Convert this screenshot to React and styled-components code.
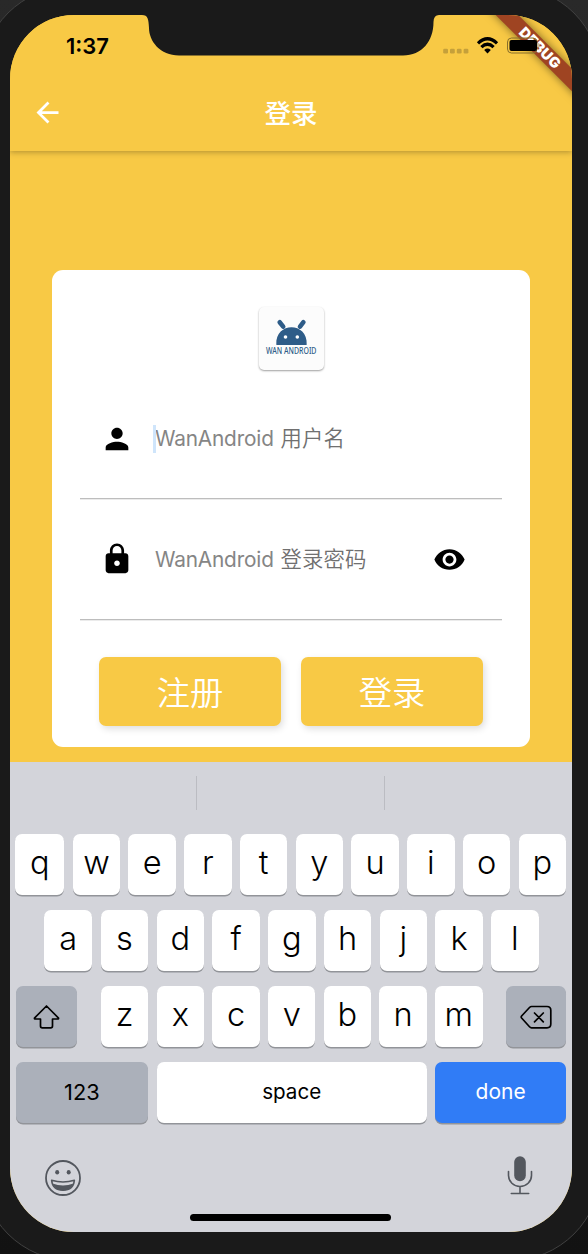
import React from 'react';
import styled, { createGlobalStyle } from 'styled-components';
import { MdArrowBack, MdPerson, MdLock, MdVisibility } from 'react-icons/md';

const GlobalStyle = createGlobalStyle`
  * { box-sizing: border-box; }
  body {
    margin: 0;
    background: #1a1a1a;
    font-family: Inter, 'Noto Sans CJK SC', sans-serif;
  }
`;

const yellow = '#f8c945';

const Stage = styled.div`
  position: relative;
  width: 588px;
  height: 1254px;
  padding: 15px 16px 22px 10px;
  overflow: hidden;
  background: linear-gradient(#292929, #121212);
`;

const Bezel = styled.div`
  position: absolute;
  left: -19px;
  top: -14px;
  width: 620px;
  height: 1275px;
  border: 1.5px solid #414141;
  border-radius: 91px;
  background: #1a1a1a;
`;

const Screen = styled.div`
  position: relative;
  display: flex;
  flex-direction: column;
  width: 562px;
  height: 1217px;
  border-radius: 64px;
  overflow: hidden;
  background: ${yellow};
`;

const Notch = styled.svg`
  position: absolute;
  left: 130px;
  top: 0;
  z-index: 3;
`;

const Ribbon = styled.div`
  position: absolute;
  left: 449.5px;
  top: 24.5px;
  z-index: 2;
  width: 160px;
  height: 16px;
  line-height: 15.5px;
  text-align: center;
  transform: rotate(45deg);
  background: #9f4422;
  box-shadow: 0 0 8px rgba(0, 0, 0, 0.5);
  color: #fff;
  font-size: 14.5px;
  font-weight: 900;
  letter-spacing: 0.3px;
`;

const AppBar = styled.header`
  position: relative;
  flex: none;
  height: 136px;
  background: ${yellow};
  box-shadow: 0 1px 6px rgba(0, 0, 0, 0.3);
`;

const StatusBar = styled.div`
  position: relative;
  z-index: 4;
  display: flex;
  align-items: center;
  justify-content: space-between;
  height: 60px;
  padding: 0 31px 0 56px;
`;

const Time = styled.span`
  font-size: 22px;
  font-weight: 600;
  line-height: 26px;
  color: #000;
  padding-top: 1px;
`;

const StatusIcons = styled.svg`
  display: block;
`;

const TitleRow = styled.div`
  display: grid;
  grid-template-columns: 76px 1fr 76px;
  align-items: center;
  height: 76px;
  color: #fff;
`;

const BackButton = styled.button`
  display: flex;
  justify-content: center;
  padding: 0 1px 1px 0;
  border: 0;
  background: none;
  color: #fff;
`;

const Title = styled.h1`
  margin: 0;
  padding-bottom: 1px;
  text-align: center;
  font-size: 26.5px;
  line-height: 38px;
  font-weight: 500;
`;

const Content = styled.main`
  flex: 1;
  padding: 119px 42px 0;
`;

const Card = styled.section`
  display: flex;
  flex-direction: column;
  width: 478px;
  height: 476.5px;
  padding: 37px 28px 20.5px;
  border-radius: 11px;
  background: #fff;
`;

const Logo = styled.div`
  align-self: center;
  width: 65px;
  height: 63px;
  border-radius: 5px;
  background: #fcfcfc;
  box-shadow: 0 1px 2px rgba(0, 0, 0, 0.38);
  svg { display: block; overflow: visible; }
`;

const Field = styled.label`
  display: flex;
  align-items: center;
  height: ${(p) => p.$height}px;
  padding: ${(p) => p.$drop || 0}px 36px 0 19.6px;
  border-bottom: 1px solid #bdbdbd;
  box-shadow: 0 1px 0 rgba(0, 0, 0, 0.08);
  color: #000;
`;

const Hint = styled.span`
  position: relative;
  flex: 1;
  padding-top: 1px;
  margin-left: 21.4px;
  color: #858585;
  font-size: 20.8px;
  font-weight: 400;
  line-height: 28px;
  letter-spacing: -0.18px;
  white-space: pre;
`;

const Cjk = styled.span`
  margin-left: 1.2px;
  font-family: 'Noto Sans CJK SC DemiLight', 'Noto Sans CJK SC', sans-serif;
  font-size: 21.4px;
  font-weight: 300;
  letter-spacing: 0.1px;
  line-height: 1;
  color: #707070;
`;

const Caret = styled.i`
  position: absolute;
  left: -2px;
  top: 1px;
  width: 3px;
  height: 28px;
  background: #cfe5fb;
`;

const Actions = styled.div`
  display: flex;
  gap: 20px;
  padding: 0 19px;
  margin-top: auto;
`;

const ActionButton = styled.button`
  flex: 1;
  height: 69px;
  padding: 0 0 2px;
  border: 0;
  border-radius: 7px;
  background: ${yellow};
  box-shadow: 2px 3px 7px rgba(0, 0, 0, 0.13);
  color: #fff;
  font-family: 'Noto Sans CJK SC DemiLight', 'Noto Sans CJK SC', sans-serif;
  font-size: 33.3px;
  font-weight: 400;
`;

const Keyboard = styled.section`
  display: flex;
  flex-direction: column;
  flex: none;
  height: 470px;
  background: #d3d4da;
`;

const Suggestions = styled.div`
  display: flex;
  height: 72px;
  padding: 14px 1px 24px 0;
`;

const Suggestion = styled.div`
  flex: 1;
  border-right: 1px solid #bbbcc2;
  &:last-child { border-right: 0; }
`;

const Rows = styled.div`
  display: flex;
  flex-direction: column;
  gap: 15px;
`;

const KeyRow = styled.div`
  display: flex;
  gap: 8.3px;
  height: 61px;
  padding: 0 ${(p) => p.$right}px 0 ${(p) => p.$left}px;
`;

const keyColors = { letter: '#fff', system: '#abb0ba', primary: '#307cf6' };

const Key = styled.button`
  display: flex;
  align-items: center;
  justify-content: center;
  flex: ${(p) => (p.$width ? `0 0 ${p.$width}px` : '1 1 0')};
  min-width: 0;
  margin: 0 ${(p) => p.$after || 0}px 0 ${(p) => p.$before || 0}px;
  padding: 0 0 ${(p) => p.$lift || 0}px;
  border: 0;
  border-radius: 7px;
  background: ${(p) => keyColors[p.$kind || 'letter']};
  box-shadow: 0 1.5px 0 #929499;
  color: ${(p) => (p.$kind === 'primary' ? '#fff' : '#000')};
  font-family: Inter, sans-serif;
  font-size: ${(p) => p.$text || 33}px;
  font-weight: ${(p) => p.$weight || 320};
  line-height: 40px;
`;

const BottomBar = styled.div`
  display: flex;
  justify-content: space-between;
  padding: 32px 38.6px 0 34px;
`;

const HomeIndicator = styled.div`
  width: 201px;
  height: 7px;
  margin: auto auto 11px 180.4px;
  border-radius: 4px;
  background: #000;
`;

const letters = (s, first) =>
  s.split('').map((c, i) => (
    <Key key={c} $lift={6} $text={32.6} $width={i === 0 ? first : undefined}>{c}</Key>
  ));

export default function App() {
  return (
    <Stage>
      <GlobalStyle />
      <Bezel />
      <Screen>
        <Notch width="302" height="42" viewBox="0 0 302 42">
          <path d="M0 -1H302V0H299Q293.7 0 293.5 7C293.5 26 282 40.5 263 40.5H39C20 40.5 9 26 9 13C8.5 4 8 0 2 0H0Z" fill="#1a1a1a" />
        </Notch>
        <Ribbon>DEBUG</Ribbon>
        <AppBar>
          <StatusBar>
            <Time>1:37</Time>
            <StatusIcons width="98" height="20" viewBox="0 0 98 20">
              <g fill="#c5a03a">
                {[0.2, 7, 13.8, 20.6].map((x) => <rect key={x} x={x} y="13.7" width="4.8" height="4.8" rx="1.3" />)}
              </g>
              <g fill="none" stroke="#000">
                <path d="M35 8.3Q44.5 -0.8 54 8.3" strokeWidth="3.2" />
                <path d="M38.4 12.2Q44.5 6.3 50.6 12.2" strokeWidth="3.2" />
              </g>
              <path d="M41.2 15Q44.5 12.1 47.8 15L44.5 18.5Z" />
              <rect x="64.5" y="3" width="29.5" height="15" rx="4" fill="none" stroke="#876e2a" />
              <rect x="66.5" y="5" width="27.5" height="11" rx="2" />
              <path d="M95.5 7.8Q98 10.3 95.5 13.3Z" fill="#9b7b56" />
            </StatusIcons>
          </StatusBar>
          <TitleRow>
            <BackButton><MdArrowBack size={33} /></BackButton>
            <Title>登录</Title>
          </TitleRow>
        </AppBar>
        <Content>
          <Card>
            <Logo>
              <svg width="65" height="63" viewBox="0 0 65 63">
                <g fill="#2e5c88">
                  <path d="M17.3 37.5C16 14.5 49 14.5 47.7 37.5Q47.7 38 46.7 38H18.3Q17.3 38 17.3 37.5Z" />
                  <path d="M20.7 15.2L24.2 19.6M44.4 15.2L41 19.6" stroke="#2e5c88" strokeWidth="4.6" strokeLinecap="round" />
                </g>
                <circle cx="26.5" cy="30" r="1.8" fill="#fff" />
                <circle cx="38.3" cy="30" r="1.8" fill="#fff" />
                <text x="32.2" y="47" textAnchor="middle" textLength="50.5" lengthAdjust="spacingAndGlyphs" fontFamily="'Noto Sans', sans-serif" fontSize="8.7" fontWeight="500" fill="#2e5c88">WAN ANDROID</text>
              </svg>
            </Logo>
            <Field $height={129} $drop={9}>
              <MdPerson size={34} />
              <Hint><Caret />WanAndroid <Cjk>用户名</Cjk></Hint>
            </Field>
            <Field $height={121}>
              <MdLock size={34} />
              <Hint>WanAndroid <Cjk>登录密码</Cjk></Hint>
              <MdVisibility size={33} />
            </Field>
            <Actions>
              <ActionButton>注册</ActionButton>
              <ActionButton>登录</ActionButton>
            </Actions>
          </Card>
        </Content>
        <Keyboard>
          <Suggestions><Suggestion /><Suggestion /><Suggestion /></Suggestions>
          <Rows>
            <KeyRow $left={5.4} $right={6}>{letters('qwertyuiop', 49)}</KeyRow>
            <KeyRow $left={33.7} $right={33.4}>{letters('asdfghjkl', 48.8)}</KeyRow>
            <KeyRow $left={5.5} $right={5.8}>
              <Key $kind="system" $width={61} $after={16.2}>
                <svg width="28" height="25" viewBox="0 0 28 25" fill="none" stroke="#000" strokeWidth="1.7" strokeLinejoin="round">
                  <path d="M14.5 2L26.3 13.8Q27 15 25.5 15H20.5V22Q20.5 23.8 18.7 23.8H10.3Q8.5 23.8 8.5 22V15H3.5Q2 15 2.7 13.8Z" />
                </svg>
              </Key>
              {letters('zxcvbnm')}
              <Key $kind="system" $width={60.5} $before={14.9}>
                <svg width="32" height="24" viewBox="0 0 32 24" fill="none" stroke="#000" strokeWidth="1.7" strokeLinejoin="round">
                  <path d="M11.5 1.5H27Q30.8 1.5 30.8 5.3V19Q30.8 22.8 27 22.8H11.5Q10.5 22.8 9.5 21.7L1.6 13Q0.8 12 1.6 11L9.5 2.5Q10.5 1.5 11.5 1.5Z" />
                  <path d="M14.5 8L23.3 16.8M23.3 8L14.5 16.8" strokeLinecap="round" />
                </svg>
              </Key>
            </KeyRow>
            <KeyRow $left={5.5} $right={5.8}>
              <Key $kind="system" $width={132.8} $text={21.8} $weight={370} $lift={1}>123</Key>
              <Key $text={20.6} $weight={400} $lift={2}>space</Key>
              <Key $kind="primary" $width={131.2} $text={21} $weight={370} $lift={2}>done</Key>
            </KeyRow>
          </Rows>
          <BottomBar>
            <svg width="38" height="44" viewBox="0 0 38 44" fill="none" stroke="#53575e">
              <circle cx="19" cy="23" r="17" strokeWidth="1.8" />
              <g fill="#53575e" stroke="none">
                <ellipse cx="13.2" cy="17.3" rx="2" ry="2.3" />
                <ellipse cx="24.7" cy="17.3" rx="2" ry="2.3" />
                <path d="M8.5 28.5Q19 32.5 29.5 28.5Q26.5 35.5 19 35.5T8.5 28.5Z" />
              </g>
              <path d="M7.6 25.2Q19 28.6 30.4 25.2Q29.5 35.3 19 35.3T7.6 25.2Z" strokeWidth="1.5" strokeLinejoin="round" />
            </svg>
            <svg width="26" height="44" viewBox="0 0 26 44" fill="none" stroke="#53575e" strokeWidth="1.6">
              <rect x="7.2" y="1.3" width="11.6" height="25" rx="5.8" fill="#53575e" stroke="none" />
              <path d="M1.5 16.5V20.5A11.5 11 0 0 0 24.5 20.5V16.5M13 31.5V38.5M4.3 38.5H21.7" strokeLinecap="round" />
            </svg>
          </BottomBar>
          <HomeIndicator />
        </Keyboard>
      </Screen>
    </Stage>
  );
}
